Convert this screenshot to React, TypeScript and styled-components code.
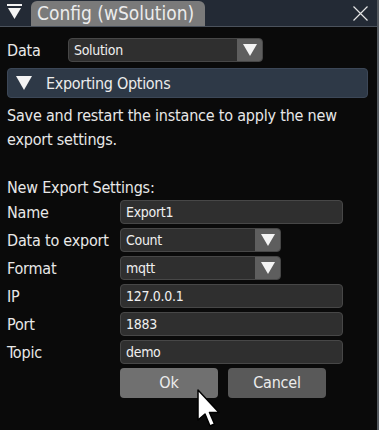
import styled, { createGlobalStyle } from "styled-components";

const GlobalStyle = createGlobalStyle`
  html, body {
    margin: 0;
    padding: 0;
    background: #0a0a0a;
  }
  body {
    font-family: "DejaVu Sans Condensed", "DejaVu Sans", sans-serif;
    color: #e8e8e8;
  }
`;

const rows = [
  { label: "Name", value: "Export1", combo: false },
  { label: "Data to export", value: "Count", combo: true },
  { label: "Format", value: "mqtt", combo: true },
  { label: "IP", value: "127.0.0.1", combo: false },
  { label: "Port", value: "1883", combo: false },
  { label: "Topic", value: "demo", combo: false },
];

function DownArrow() {
  return (
    <svg width="14" height="12" viewBox="0 0 14 12">
      <path d="M0 0 H14 L7 12 Z" fill="#f4f4f4" />
    </svg>
  );
}

export default function App() {
  return (
    <>
      <GlobalStyle />
      <Window>
        <TitleBar>
          <CollapseIcon>
            <svg width="16" height="16" viewBox="0 0 16 16">
              <rect x="0" y="0" width="15" height="2" fill="#f4f4f4" />
              <path d="M1 4 H14 L7.5 15 Z" fill="#f4f4f4" />
            </svg>
          </CollapseIcon>
          <Tab>Config (wSolution)</Tab>
          <Close>
            <svg width="15" height="15" viewBox="0 0 15 15">
              <path d="M0.5 0.5 L14.5 14.5 M14.5 0.5 L0.5 14.5" stroke="#e4e4e4" strokeWidth="1.2" />
            </svg>
          </Close>
        </TitleBar>
        <Body>
          <DataRow>
            <DataLabel>Data</DataLabel>
            <Combo $width={195}>
              <ComboValue>Solution</ComboValue>
              <ComboArrow>
                <DownArrow />
              </ComboArrow>
            </Combo>
          </DataRow>
          <Header>
            <svg width="16" height="14" viewBox="0 0 16 14">
              <path d="M0 0 H16 L8 14 Z" fill="#f4f4f4" />
            </svg>
            <span>Exporting Options</span>
          </Header>
          <Paragraph>
            Save and restart the instance to apply the new
            <br />
            export settings.
          </Paragraph>
          <SectionTitle>New Export Settings:</SectionTitle>
          <Form>
            {rows.map((r) => (
              <FieldRow key={r.label}>
                <FieldLabel>{r.label}</FieldLabel>
                {r.combo ? (
                  <Combo $width={161}>
                    <ComboValue>{r.value}</ComboValue>
                    <ComboArrow>
                      <DownArrow />
                    </ComboArrow>
                  </Combo>
                ) : (
                  <Input>{r.value}</Input>
                )}
              </FieldRow>
            ))}
            <Buttons>
              <Button $hover>Ok</Button>
              <Button>Cancel</Button>
            </Buttons>
          </Form>
        </Body>
        <Cursor>
          <svg width="24" height="40" viewBox="0 0 24 40">
            <path
              d="M1 1 L1 31 L8 25 L13 37 L17.5 35 L12.5 23.5 L22 23.5 Z"
              fill="#ffffff"
              stroke="#000000"
              strokeWidth="1.5"
              strokeLinejoin="round"
            />
          </svg>
        </Cursor>
      </Window>
    </>
  );
}

const Window = styled.div`
  position: relative;
  width: 377px;
  height: 430px;
  border-right: 2px solid #555a60;
  background: #0a0a0a;
  overflow: hidden;
`;

const TitleBar = styled.div`
  display: flex;
  align-items: flex-end;
  height: 27px;
  background: #232a35;
  border-bottom: 1px solid #4b525c;
  box-sizing: border-box;
`;

const CollapseIcon = styled.div`
  width: 31px;
  height: 27px;
  display: flex;
  padding: 5px 0 0 7px;
  box-sizing: border-box;
`;

const Tab = styled.div`
  width: 174px;
  height: 25px;
  background: #7a7a7a;
  border-radius: 6px 6px 0 0;
  padding: 0 6px;
  box-sizing: border-box;
  font-size: 19px;
  line-height: 25px;
  white-space: nowrap;
  color: #ececec;
`;

const Close = styled.div`
  margin-left: auto;
  margin-right: 9px;
  align-self: center;
  display: flex;
`;

const Body = styled.div`
  padding: 11px 9px 0 7px;
`;

const DataRow = styled.div`
  display: flex;
  align-items: center;
  height: 24px;
`;

const DataLabel = styled.div`
  width: 61px;
  font-size: 16px;
  letter-spacing: -0.2px;
`;

const Combo = styled.div<{ $width: number }>`
  display: flex;
  width: ${(p) => p.$width}px;
  height: 24px;
  box-sizing: border-box;
  border: 1px solid #474747;
  border-radius: 4px;
  background: #2f2f2f;
  overflow: hidden;
`;

const ComboValue = styled.div`
  flex: 1;
  padding-left: 5px;
  font-size: 14px;
  letter-spacing: -0.3px;
  line-height: 22px;
  white-space: nowrap;
  color: #f0f0f0;
`;

const ComboArrow = styled.div`
  width: 25px;
  background: #5e5e5e;
  display: flex;
  align-items: center;
  justify-content: center;
`;

const Header = styled.div`
  display: flex;
  align-items: center;
  gap: 14px;
  margin-top: 6px;
  height: 30px;
  padding-left: 8px;
  box-sizing: border-box;
  background: #2e3947;
  border: 1px solid #3c4757;
  border-radius: 4px;
  font-size: 16px;
  letter-spacing: -0.3px;
  color: #ececec;
`;

const Paragraph = styled.div`
  margin-top: 6px;
  font-size: 16px;
  letter-spacing: -0.2px;
  line-height: 24px;
  white-space: nowrap;
`;

const SectionTitle = styled.div`
  margin-top: 24px;
  font-size: 16px;
  letter-spacing: -0.2px;
  line-height: 24px;
`;

const Form = styled.div`
  display: flex;
  flex-direction: column;
  gap: 4px;
`;

const FieldRow = styled.div`
  display: flex;
  align-items: center;
  height: 24px;
`;

const FieldLabel = styled.div`
  width: 113px;
  font-size: 16px;
  letter-spacing: -0.2px;
  white-space: nowrap;
`;

const Input = styled.div`
  width: 223px;
  height: 24px;
  box-sizing: border-box;
  border: 1px solid #474747;
  border-radius: 4px;
  background: #2f2f2f;
  padding-left: 5px;
  font-size: 14px;
  letter-spacing: -0.3px;
  line-height: 22px;
  color: #f0f0f0;
`;

const Buttons = styled.div`
  display: flex;
  gap: 10px;
  padding-left: 113px;
`;

const Button = styled.div<{ $hover?: boolean }>`
  width: 98px;
  height: 30px;
  border-radius: 4px;
  background: ${(p) => (p.$hover ? "#707070" : "#595959")};
  color: #ececec;
  font-size: 16px;
  letter-spacing: -0.2px;
  line-height: 30px;
  text-align: center;
`;

const Cursor = styled.div`
  position: absolute;
  left: 197px;
  top: 389px;
  display: flex;
`;
